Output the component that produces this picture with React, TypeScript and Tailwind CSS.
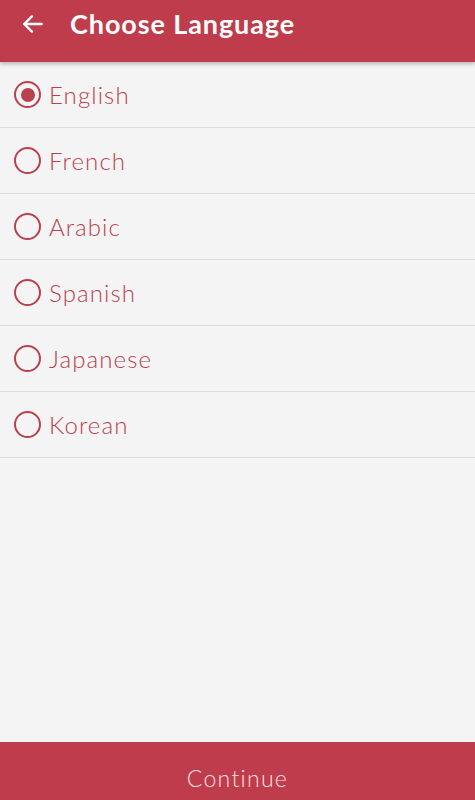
import { useState } from "react";

const languages = ["English", "French", "Arabic", "Spanish", "Japanese", "Korean"];

const App = () => {
  const [selected, setSelected] = useState("English");

  return (
    <div className="w-full h-[800px] flex flex-col bg-[#f4f4f4] font-['Lato','Noto_Sans',sans-serif]">
      <header className="h-[62px] shrink-0 flex items-center gap-[24px] px-[20px] pb-[15px] bg-[#be3c4b] text-white shadow-[0_2px_4px_rgba(0,0,0,0.25)] z-10">
        <svg width="26" height="26" viewBox="0 0 24 24" fill="none" stroke="currentColor" strokeWidth="2.2" strokeLinecap="round" strokeLinejoin="round">
          <path d="M20 12H4" />
          <path d="M11 5l-7 7 7 7" />
        </svg>
        <h1 className="text-[27px] font-bold tracking-[0.9px] leading-none">Choose Language</h1>
      </header>
      <ul className="flex-1">
        {languages.map((lang) => (
          <li
            key={lang}
            onClick={() => setSelected(lang)}
            className="h-[66px] flex items-center gap-[8px] pl-[14px] border-b border-[#dcdcdc] cursor-pointer"
          >
            <span className="w-[27px] h-[27px] rounded-full border-[2.5px] border-[#b9414f] flex items-center justify-center">
              {selected === lang && <span className="w-[14px] h-[14px] rounded-full bg-[#b9414f]" />}
            </span>
            <span className="text-[24px] text-[#b9414f] font-light tracking-[1.1px]">{lang}</span>
          </li>
        ))}
      </ul>
      <button className="h-[58px] shrink-0 pt-[14px] bg-[#be3c4b] text-[#fde0e3] text-[23px] font-light tracking-[1.3px]">
        Continue
      </button>
    </div>
  );
};

export default App;
